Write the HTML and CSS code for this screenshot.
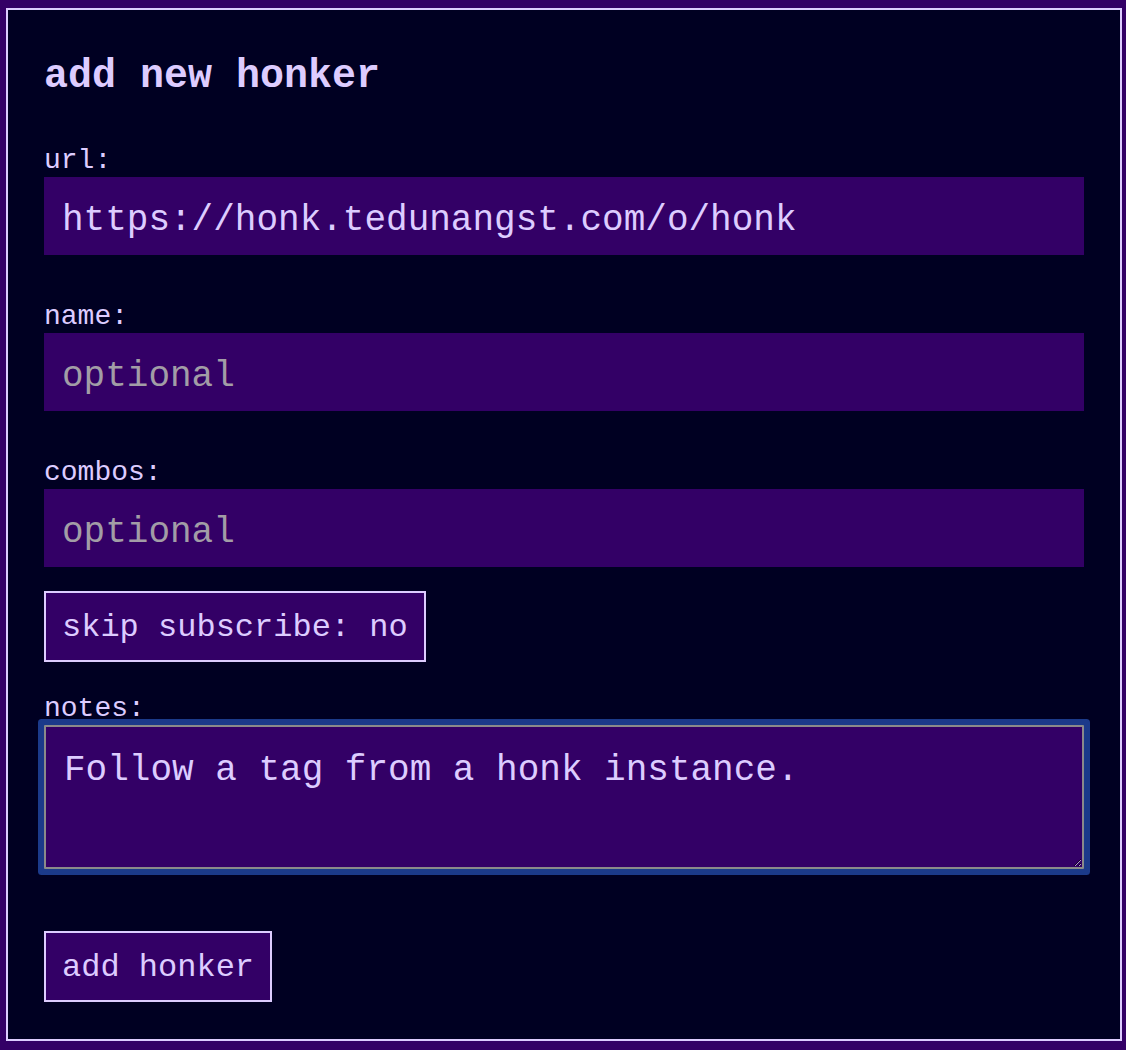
FILE: index.html
```html
<!DOCTYPE html>
<html>
<head>
<meta charset="utf-8">
<link rel="stylesheet" href="styles.css">
</head>
<body>
<main class="panel">
  <h2 class="title">add new honker</h2>
  <form class="honker-form">
    <div class="field">
      <label class="label" for="url">url:</label>
      <input class="text-input" id="url" type="text" value="https://honk.tedunangst.com/o/honk">
    </div>
    <div class="field">
      <label class="label" for="name">name:</label>
      <input class="text-input" id="name" type="text" placeholder="optional">
    </div>
    <div class="field field-tight">
      <label class="label" for="combos">combos:</label>
      <input class="text-input" id="combos" type="text" placeholder="optional">
    </div>
    <button class="btn" type="button">skip subscribe: no</button>
    <div class="field field-notes">
      <label class="label" for="notes">notes:</label>
      <textarea class="notes" id="notes">Follow a tag from a honk instance.</textarea>
    </div>
    <button class="btn btn-submit" type="button">add honker</button>
  </form>
</main>
</body>
</html>
```
FILE: styles.css
```css
html, body {
  margin: 0;
  padding: 0;
}
body {
  background: #330066;
  color: #ddccff;
  font-family: "Liberation Mono", "Courier New", monospace;
}
.panel {
  margin: 8px 4px 9px 6px;
  border: 2px solid #ddccff;
  background: #000022;
  padding: 36px 36px 37px 36px;
}
.title {
  margin: 8px 0 45px;
  font-size: 40px;
  line-height: 45px;
  font-weight: bold;
}
.honker-form {
  display: flex;
  flex-direction: column;
  align-items: flex-start;
}
.field {
  display: flex;
  flex-direction: column;
  align-self: stretch;
  margin-bottom: 45px;
}
.field-tight {
  margin-bottom: 24px;
}
.field-notes {
  margin-top: 30px;
  margin-bottom: 62px;
}
.label {
  font-size: 28px;
  line-height: 33px;
}
.text-input {
  box-sizing: border-box;
  width: 100%;
  height: 78px;
  margin: 0;
  border: none;
  outline: none;
  background: #330066;
  color: #ddccff;
  font-family: inherit;
  font-size: 36px;
  line-height: 41px;
  padding: 23px 18px 14px;
}
.text-input::placeholder {
  color: #a29da6;
  opacity: 1;
}
.btn {
  margin: 0;
  border: 2px solid #ddccff;
  background: #330066;
  color: #ddccff;
  font-family: inherit;
  font-size: 32px;
  line-height: 36px;
  padding: 17px 16px 14px;
  height: 71px;
  box-sizing: border-box;
}
.notes {
  box-sizing: border-box;
  width: 100%;
  height: 144px;
  margin: 0;
  border: 2px solid #8a8a8a;
  border-radius: 1px;
  box-shadow: 0 0 0 6px #1b3a8a;
  outline: none;
  background: #330066;
  color: #ddccff;
  font-family: inherit;
  font-size: 36px;
  line-height: 41px;
  padding: 23px 18px 10px;
  resize: both;
}
```
